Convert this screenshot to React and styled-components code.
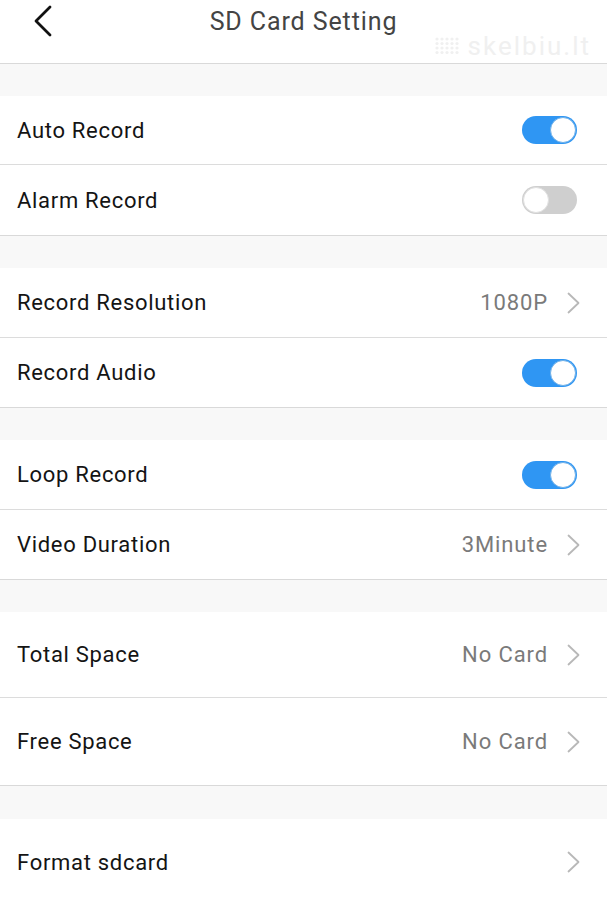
import React from "react";
import styled, { createGlobalStyle } from "styled-components";

const Global = createGlobalStyle`
  html, body { margin: 0; padding: 0; background: #f8f8f8; }
  body { font-family: Roboto, "Noto Sans", "Liberation Sans", sans-serif; }
  * { box-sizing: border-box; }
`;

const Page = styled.div`
  width: 607px;
  min-height: 900px;
  background: #f8f8f8;
  display: flex;
  flex-direction: column;
  overflow: hidden;
`;

const Header = styled.header`
  position: relative;
  height: 64px;
  background: #fff;
  border-bottom: 1px solid #d9d9d9;
  display: flex;
  align-items: center;
  justify-content: center;
`;

const BackButton = styled.button`
  position: absolute;
  left: 28px;
  top: 2px;
  width: 30px;
  height: 38px;
  border: 0;
  background: none;
  padding: 0;
  display: flex;
  align-items: center;
  justify-content: center;
`;

const Title = styled.h1`
  margin: 0 0 20px 0;
  font-size: 25px;
  font-weight: 400;
  color: #444;
  letter-spacing: 0.9px;
`;

const Watermark = styled.div`
  position: absolute;
  right: 16px;
  top: 31px;
  display: flex;
  align-items: center;
  gap: 8px;
  font-size: 26px;
  color: #f0f0f0;
  letter-spacing: 2px;
  pointer-events: none;
`;

const Gap = styled.div`
  height: ${(p) => p.$h || 32}px;
  background: #f8f8f8;
`;

const Group = styled.section`
  background: #fff;
  display: flex;
  flex-direction: column;
  border-bottom: 1px solid #d9d9d9;
`;

const Row = styled.div`
  height: ${(p) => p.$h || 68}px;
  display: flex;
  align-items: center;
  padding: 0 27px 0 17px;
  & + & { border-top: 1px solid #dcdcdc; }
`;

const Label = styled.span`
  flex: 1;
  font-size: 22px;
  letter-spacing: 0.7px;
  color: #141414;
`;

const Value = styled.span`
  font-size: 22px;
  letter-spacing: 0.9px;
  color: #7a7a7a;
  margin-right: 19px;
`;

const Track = styled.div`
  width: 55px;
  height: 28px;
  border-radius: 14px;
  background: ${(p) => (p.$on ? "#2f96f3" : "#cfcfcf")};
  display: flex;
  align-items: center;
  justify-content: ${(p) => (p.$on ? "flex-end" : "flex-start")};
  padding: 1px;
  margin-right: 3px;
`;

const Knob = styled.div`
  width: 26px;
  height: 26px;
  border-radius: 50%;
  background: #fff;
  border: 1px solid ${(p) => (p.$on ? "#6fb0e8" : "#e0e0e0")};
`;

const Chevron = () => (
  <svg width="13" height="22" viewBox="0 0 13 22" fill="none">
    <path d="M1.5 1.5 L11.5 11 L1.5 20.5" stroke="#b8b8b8" strokeWidth="1.8" strokeLinecap="round" strokeLinejoin="round" />
  </svg>
);

const Toggle = ({ on }) => (
  <Track $on={on}>
    <Knob $on={on} />
  </Track>
);

const Item = ({ label, value, toggle, chevron, h }) => (
  <Row $h={h}>
    <Label>{label}</Label>
    {value && <Value>{value}</Value>}
    {toggle !== undefined && <Toggle on={toggle} />}
    {chevron && <Chevron />}
  </Row>
);

export default function App() {
  return (
    <Page>
      <Global />
      <Header>
        <BackButton aria-label="Back">
          <svg width="22" height="32" viewBox="0 0 22 32" fill="none">
            <path d="M18 2 L4 16 L18 30" stroke="#111" strokeWidth="2.8" strokeLinecap="round" strokeLinejoin="round" />
          </svg>
        </BackButton>
        <Title>SD Card Setting</Title>
        <Watermark>
          <svg width="26" height="20" viewBox="0 0 26 20">
            {[0, 1, 2, 3].map((r) =>
              [0, 1, 2, 3, 4].map((c) => (
                <circle key={`${r}-${c}`} cx={3 + c * 5} cy={3 + r * 4.5} r="1.6" fill="#f0f0f0" />
              ))
            )}
          </svg>
          <span>skelbiu.lt</span>
        </Watermark>
      </Header>
      <Gap $h={32} />
      <Group>
        <Item label="Auto Record" toggle={true} h={68} />
        <Item label="Alarm Record" toggle={false} h={71} />
      </Group>
      <Gap $h={32} />
      <Group>
        <Item label="Record Resolution" value="1080P" chevron h={69} />
        <Item label="Record Audio" toggle={true} h={70} />
      </Group>
      <Gap $h={32} />
      <Group>
        <Item label="Loop Record" toggle={true} h={69} />
        <Item label="Video Duration" value="3Minute" chevron h={70} />
      </Group>
      <Gap $h={32} />
      <Group>
        <Item label="Total Space" value="No Card" chevron h={85} />
        <Item label="Free Space" value="No Card" chevron h={88} />
      </Group>
      <Gap $h={33} />
      <Group>
        <Item label="Format sdcard" chevron h={86} />
      </Group>
    </Page>
  );
}
